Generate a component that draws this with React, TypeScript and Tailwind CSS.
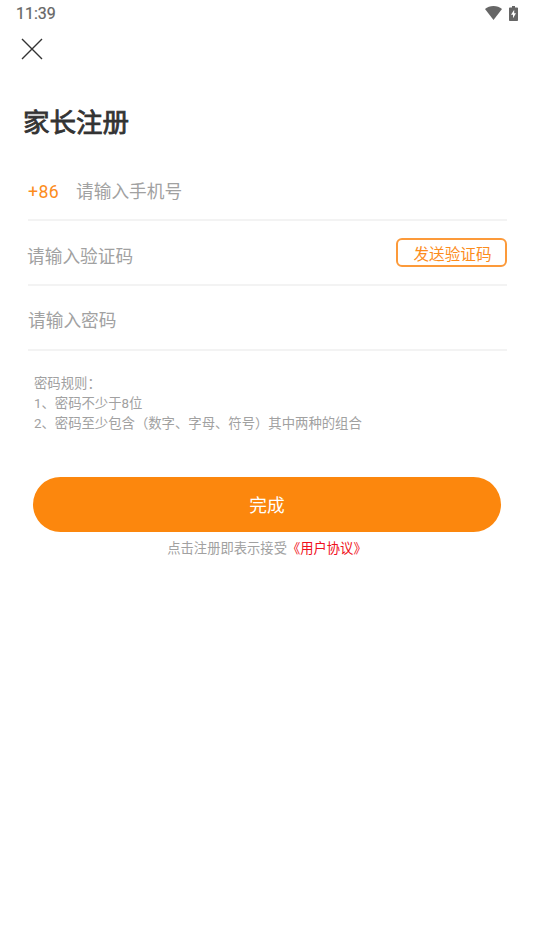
import type { ReactNode } from 'react';

const StatusBar = () => {
  return (
    <div className="flex h-7 items-center justify-between pl-4 pr-4 text-[#666]">
      <span className="font-[Roboto,sans-serif] text-[16px] leading-7 [-webkit-text-stroke:0.2px_#666]">11:39</span>
      <div className="mb-[2px] flex items-center gap-[7px]">
        <svg className="h-[14px] w-[17px]" viewBox="0 0 18 14" preserveAspectRatio="none" fill="currentColor">
          <path d="M9 14 0 2.9C2.4 1.1 5.5 0 9 0s6.6 1.1 9 2.9Z" />
        </svg>
        <svg className="h-[15px] w-[9px]" viewBox="0 0 9 16" preserveAspectRatio="none" fill="currentColor">
          <path
            fillRule="evenodd"
            d="M3 0h3v1.5h2.2q.8 0 .8.8v12.9q0 .8-.8.8H.8q-.8 0-.8-.8V2.3q0-.8.8-.8H3ZM5.2 4 2 9.3h2V13l3-5.3H5.2Z"
          />
        </svg>
      </div>
    </div>
  );
};

const Field = ({ children }: { children: ReactNode }) => {
  return (
    <div className="flex h-[64.7px] items-center border-b-2 border-[#f3f3f3] pt-[9px] text-[17.7px] text-[#a1a1a1]">
      {children}
    </div>
  );
};

const App = () => {
  return (
    <main className="h-[950px] bg-white font-[Roboto,'Noto_Sans_CJK_SC',sans-serif]">
      <StatusBar />
      <button type="button" aria-label="关闭" className="ml-[21px] mt-[10px] block">
        <svg className="size-[22px]" viewBox="0 0 22 22" fill="none" stroke="#333" strokeWidth="1.4">
          <path d="m1 1 20 20M21 1 1 21" />
        </svg>
      </button>
      <h1 className="ml-[23px] mt-[43px] text-[26.5px] leading-10 text-[#333] [-webkit-text-stroke:0.8px_#333]">
        家长注册
      </h1>

      <div className="ml-7 mr-[27px] mt-[13.5px]">
        <Field>
          <span className="w-12 tracking-[0.4px] text-[#fc8c1c]">+86</span>
          <span>请输入手机号</span>
        </Field>
        <Field>
          <span className="-ml-px flex-1">请输入验证码</span>
          <button
            type="button"
            className="mb-[9px] h-[29px] w-[111px] rounded-md border-2 border-[#fc9a3a] pl-[2px] pt-[6px] text-[15.6px] leading-none text-[#fc8c1c]"
          >
            发送验证码
          </button>
        </Field>
        <Field>
          <span>请输入密码</span>
        </Field>
      </div>

      <div className="ml-[34px] mt-[23.4px] text-[13.35px] leading-5 text-[#a1a1a1]">
        <p>密码规则：</p>
        <p>1、密码不少于8位</p>
        <p>2、密码至少包含（数字、字母、符号）其中两种的组合</p>
      </div>

      <button
        type="button"
        className="ml-[33px] mt-[43px] block h-[55px] w-[468px] rounded-full bg-[#fc870d] pt-[3px] text-[17.7px] text-white"
      >
        完成
      </button>
      <p className="mt-[7px] text-center text-[13.3px] leading-5 text-[#a1a1a1]">
        点击注册即表示接受<a className="text-[#f01020]">《用户协议》</a>
      </p>
    </main>
  );
};

export default App;
